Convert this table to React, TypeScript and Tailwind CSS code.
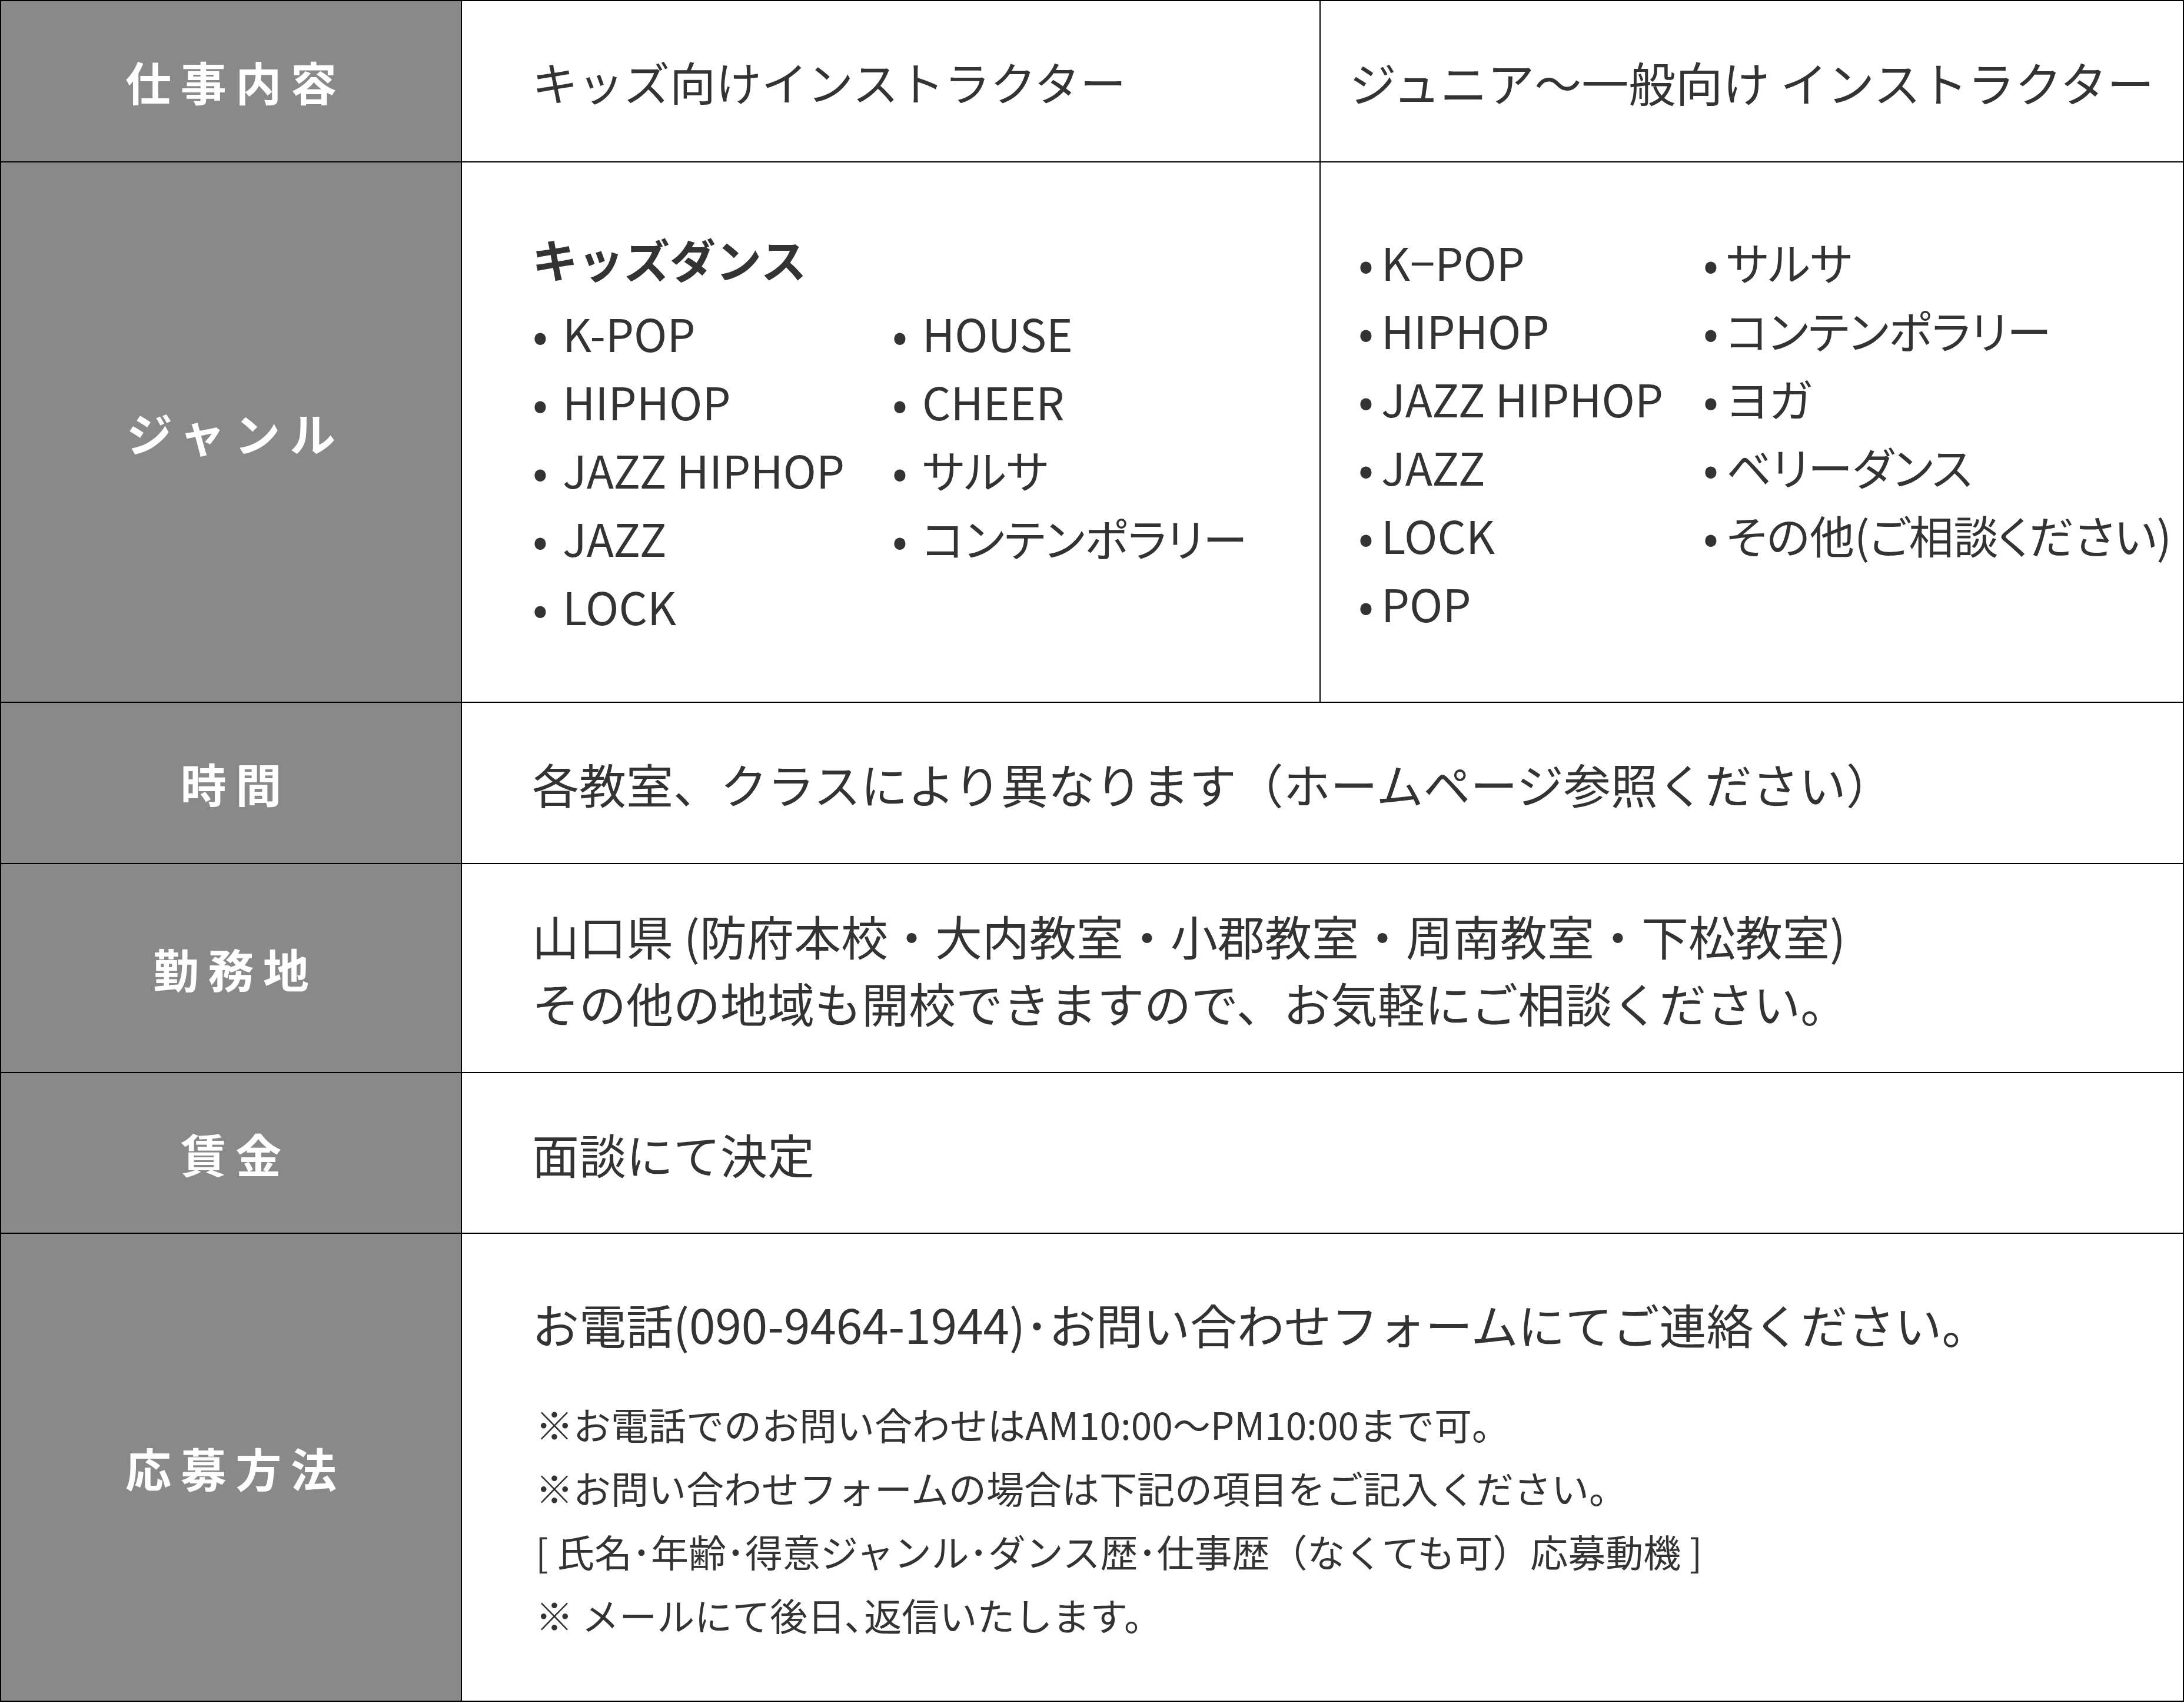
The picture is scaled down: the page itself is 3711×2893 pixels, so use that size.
const font = { fontFamily: '"Noto Sans CJK JP", "Noto Sans", sans-serif' };

const kidsLeft = ["K-POP", "HIPHOP", "JAZZ HIPHOP", "JAZZ", "LOCK"];
const kidsRight = ["HOUSE", "CHEER", "サルサ", "コンテンポラリー"];
const juniorLeft = ["K−POP", "HIPHOP", "JAZZ HIPHOP", "JAZZ", "LOCK", "POP"];
const juniorRight = ["サルサ", "コンテンポラリー", "ヨガ", "ベリーダンス", "その他(ご相談ください)"];

function Label({ children }: { children: React.ReactNode }) {
  return (
    <div className="w-[783px] shrink-0 bg-[#898989] border-r-2 border-black flex items-center justify-center">
      <span className="text-white font-bold text-[78px] leading-none tracking-[0.2em] pl-[0.2em]">{children}</span>
    </div>
  );
}

function ListItem({ text, gap }: { text: string; gap: string }) {
  return (
    <div className="flex items-center h-[116px] text-[76px] [font-feature-settings:'palt']">
      <span className="w-[28px] text-center">•</span>
      <span className={`${gap} whitespace-nowrap`}>{text}</span>
    </div>
  );
}

export default function App() {
  return (
    <div className="w-[3711px] bg-white text-[#333] text-[80px]" style={font}>
      <div className="border-2 border-black">
        {/* 仕事内容 */}
        <div className="flex h-[272px]">
          <Label>仕事内容</Label>
          <div className="w-[1459px] shrink-0 border-r-2 border-black flex items-center pl-[119px] text-[78px] whitespace-nowrap">
            キッズ向けインストラクター
          </div>
          <div className="flex-1 flex items-center justify-center whitespace-nowrap">
            ジュニア〜一般向け インストラクター
          </div>
        </div>

        {/* ジャンル */}
        <div className="flex h-[918px] border-t-2 border-black">
          <Label>ジャンル</Label>
          <div className="w-[1459px] shrink-0 border-r-2 border-black flex flex-col justify-center pl-[119px]">
            <div className="h-[116px] flex items-center font-bold text-[78px] mb-[9px]">キッズダンス</div>
            <div className="flex">
              <div className="w-[611px] flex flex-col">
                {kidsLeft.map((t) => (
                  <ListItem key={t} text={t} gap="ml-[24px]" />
                ))}
              </div>
              <div className="flex flex-col">
                {kidsRight.map((t) => (
                  <ListItem key={t} text={t} gap="ml-[24px]" />
                ))}
              </div>
            </div>
          </div>
          <div className="flex-1 flex items-center pl-[63px]">
            <div className="w-[586px] flex flex-col">
              {juniorLeft.map((t) => (
                <ListItem key={t} text={t} gap="ml-[12px]" />
              ))}
            </div>
            <div className="flex flex-col self-center pb-[116px]">
              {juniorRight.map((t) => (
                <ListItem key={t} text={t} gap="ml-[12px]" />
              ))}
            </div>
          </div>
        </div>

        {/* 時間 */}
        <div className="flex h-[274px] border-t-2 border-black">
          <Label>時間</Label>
          <div className="flex-1 flex items-center pl-[119px] whitespace-nowrap">
            各教室、クラスにより異なります（ホームページ参照ください）
          </div>
        </div>

        {/* 勤務地 */}
        <div className="flex h-[355px] border-t-2 border-black">
          <Label>勤務地</Label>
          <div className="flex-1 flex flex-col justify-center pl-[119px] leading-[114px] whitespace-nowrap">
            <div>山口県 (防府本校・大内教室・小郡教室・周南教室・下松教室)</div>
            <div>その他の地域も開校できますので、お気軽にご相談ください。</div>
          </div>
        </div>

        {/* 賃金 */}
        <div className="flex h-[273px] border-t-2 border-black">
          <Label>賃金</Label>
          <div className="flex-1 flex items-center pl-[119px]">面談にて決定</div>
        </div>

        {/* 応募方法 */}
        <div className="flex h-[795px] border-t-2 border-black">
          <Label>応募方法</Label>
          <div className="flex-1 flex flex-col justify-center pl-[119px] whitespace-nowrap">
            <div className="leading-[116px]">お電話(090-9464-1944)･お問い合わせフォームにてご連絡ください。</div>
            <div className="mt-[58px] text-[64px] leading-[108px] pl-[6px]">
              <div>※お電話でのお問い合わせはAM10:00〜PM10:00まで可。</div>
              <div>※お問い合わせフォームの場合は下記の項目をご記入ください。</div>
              <div>[ 氏名･年齢･得意ジャンル･ダンス歴･仕事歴（なくても可）応募動機 ]</div>
              <div>※ メールにて後日､返信いたします。</div>
            </div>
          </div>
        </div>
      </div>
    </div>
  );
}
